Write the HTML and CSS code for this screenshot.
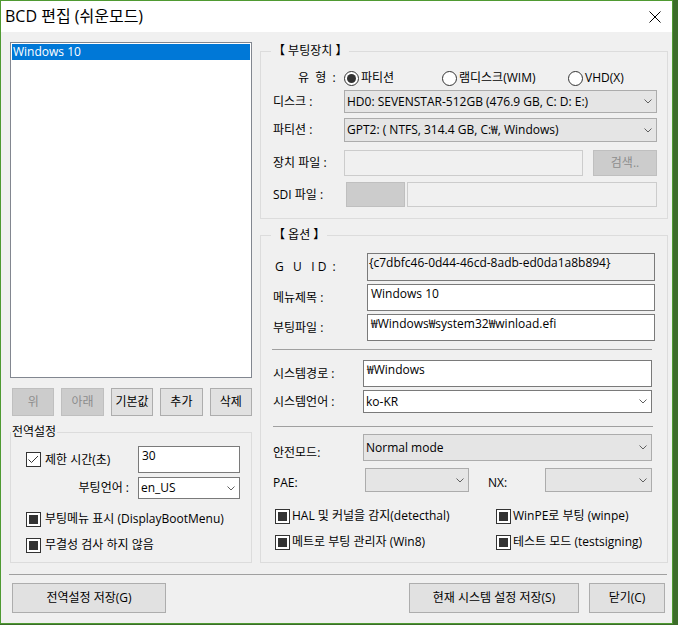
FILE: index.html
```html
<!DOCTYPE html>
<html lang="ko">
<head>
<meta charset="utf-8">
<title>BCD 편집 (쉬운모드)</title>
<link rel="stylesheet" href="styles.css">
</head>
<body>
<div class="window">
  <div class="titlebar">
    <span class="title">BCD 편집 (쉬운모드)</span>
    <span class="close"><svg width="12" height="12" viewBox="0 0 12 12"><path d="M0.5 0.5L11.5 11.5M11.5 0.5L0.5 11.5" stroke="#000" stroke-width="1" fill="none"/></svg></span>
  </div>
  <div class="client">
    <div class="main">
      <div class="left">
        <div class="listbox">
          <div class="list-item sel">Windows 10</div>
        </div>
        <div class="btnrow">
          <button class="btn dis">위</button>
          <button class="btn dis">아래</button>
          <button class="btn">기본값</button>
          <button class="btn">추가</button>
          <button class="btn">삭제</button>
        </div>
        <fieldset class="group global">
          <legend>전역설정</legend>
          <div class="global-body">
            <div class="grow r1">
              <div class="chk gchk"><span class="cb"><svg width="13" height="13" viewBox="0 0 13 13"><path d="M1.5 6.5L4.5 9.5L11 3" fill="none" stroke="#333" stroke-width="1"/></svg></span>제한 시간(초)</div>
              <div class="edit full">30</div>
            </div>
            <div class="grow r2">
              <span class="lbl-r">부팅언어 :</span>
              <div class="combo white full"><span>en_US</span><svg class="chev" width="8" height="5" viewBox="0 0 8 5"><path d="M0.5 0.5L4 4L7.5 0.5" fill="none" stroke="#606060"/></svg></div>
            </div>
            <div class="chk gchk r3"><span class="cb ind"></span>부팅메뉴 표시 (DisplayBootMenu)</div>
            <div class="chk gchk r4"><span class="cb ind"></span>무결성 검사 하지 않음</div>
          </div>
        </fieldset>
      </div>
      <div class="right">
        <fieldset class="group boot">
          <legend>【 부팅장치 】</legend>
          <div class="boot-body">
            <div class="frow type-row">
              <span class="type-lbl">유&nbsp;&nbsp;형&nbsp;&nbsp;:</span>
              <div class="radios">
                <div class="ropt"><span class="radio on"></span>파티션</div>
                <div class="ropt"><span class="radio"></span>램디스크(WIM)</div>
                <div class="ropt"><span class="radio"></span>VHD(X)</div>
              </div>
            </div>
            <div class="frow disk-row">
              <span>디스크 :</span>
              <div class="combo full"><span>HD0: SEVENSTAR-512GB (476.9 GB, C: D: E:)</span><svg class="chev" width="8" height="5" viewBox="0 0 8 5"><path d="M0.5 0.5L4 4L7.5 0.5" fill="none" stroke="#606060"/></svg></div>
            </div>
            <div class="frow part-row">
              <span>파티션 :</span>
              <div class="combo full"><span>GPT2: ( NTFS, 314.4 GB, C:₩, Windows)</span><svg class="chev" width="8" height="5" viewBox="0 0 8 5"><path d="M0.5 0.5L4 4L7.5 0.5" fill="none" stroke="#606060"/></svg></div>
            </div>
            <div class="frow dev-row">
              <span>장치 파일 :</span>
              <div class="dev-ctrl">
                <div class="edit dis-edit"></div>
                <button class="btn dis search">검색..</button>
              </div>
            </div>
            <div class="frow sdi-row">
              <span>SDI 파일 :</span>
              <div class="sdi-ctrl">
                <div class="sdi-box"></div>
                <div class="edit dis-edit"></div>
              </div>
            </div>
          </div>
        </fieldset>
        <fieldset class="group opts">
          <legend>【 옵션 】</legend>
          <div class="opts-body">
            <div class="arow guid-row">
              <span class="guid-lbl">G&nbsp;&nbsp;&nbsp;U&nbsp;&nbsp;&nbsp;I&nbsp;D&nbsp;&nbsp;:</span>
              <div class="edit ro guid">{c7dbfc46-0d44-46cd-8adb-ed0da1a8b894}</div>
            </div>
            <div class="arow menu-row">
              <span>메뉴제목 :</span>
              <div class="edit">Windows 10</div>
            </div>
            <div class="arow file-row">
              <span>부팅파일 :</span>
              <div class="edit">₩Windows₩system32₩winload.efi</div>
            </div>
            <div class="hline hline1"></div>
            <div class="brow path-row">
              <span>시스템경로 :</span>
              <div class="edit">₩Windows</div>
            </div>
            <div class="brow lang-row">
              <span>시스템언어 :</span>
              <div class="combo white full"><span>ko-KR</span><svg class="chev" width="8" height="5" viewBox="0 0 8 5"><path d="M0.5 0.5L4 4L7.5 0.5" fill="none" stroke="#606060"/></svg></div>
            </div>
            <div class="hline hline2"></div>
            <div class="brow safe-row">
              <span class="safe-lbl">안전모드:</span>
              <div class="combo full"><span>Normal mode</span><svg class="chev" width="8" height="5" viewBox="0 0 8 5"><path d="M0.5 0.5L4 4L7.5 0.5" fill="none" stroke="#606060"/></svg></div>
            </div>
            <div class="pae-row">
              <span class="pae-lbl">PAE:</span>
              <div class="combo full"><span></span><svg class="chev" width="8" height="5" viewBox="0 0 8 5"><path d="M0.5 0.5L4 4L7.5 0.5" fill="none" stroke="#606060"/></svg></div>
              <span class="pae-lbl nx-lbl">NX:</span>
              <div class="combo full"><span></span><svg class="chev" width="8" height="5" viewBox="0 0 8 5"><path d="M0.5 0.5L4 4L7.5 0.5" fill="none" stroke="#606060"/></svg></div>
            </div>
            <div class="chk-grid">
              <div class="chk ochk"><span class="cb ind"></span>HAL 및 커널을 감지(detecthal)</div>
              <div class="chk ochk"><span class="cb ind"></span>WinPE로 부팅 (winpe)</div>
              <div class="chk ochk"><span class="cb ind"></span>메트로 부팅 관리자 (Win8)</div>
              <div class="chk ochk"><span class="cb ind"></span>테스트 모드 (testsigning)</div>
            </div>
          </div>
        </fieldset>
      </div>
    </div>
    <div class="hsep"></div>
    <div class="footer">
      <button class="btn fbtn f1">전역설정 저장(G)</button>
      <button class="btn fbtn f2">현재 시스템 설정 저장(S)</button>
      <button class="btn fbtn f3">닫기(C)</button>
    </div>
  </div>
</div>
</body>
</html>
```

FILE: styles.css
```css
* { box-sizing: border-box; }
html, body { margin: 0; padding: 0; }
body {
  width: 678px;
  height: 625px;
  overflow: hidden;
  background: #3c6d2a;
  font-family: "Open Sans", "Noto Sans CJK KR", sans-serif;
  font-size: 12px;
  line-height: 16px;
  color: #000;
}
.window {
  width: 673px;
  height: 624px;
  border: 1px solid #4f9a32;
  background: #f0f0f0;
  display: flex;
  flex-direction: column;
}
.titlebar {
  flex: none;
  height: 31px;
  background: #fff;
  display: flex;
  align-items: center;
  padding-left: 4px;
}
.title {
  flex: 1;
  font-size: 16px;
  line-height: 31px;
  white-space: nowrap;
}
.close {
  width: 34px;
  height: 31px;
  display: flex;
  align-items: center;
  justify-content: center;
}
.client {
  flex: 1;
  padding: 10px 4px 0 9px;
  display: flex;
  flex-direction: column;
}
.main {
  display: grid;
  grid-template-columns: 242px 408px;
  column-gap: 8px;
  align-items: start;
}

/* controls */
.btn {
  margin: 0;
  padding: 0;
  font: inherit;
  color: #000;
  background: #e1e1e1;
  border: 1px solid #adadad;
  display: flex;
  align-items: center;
  justify-content: center;
  white-space: nowrap;
}
.btn.dis {
  background: #cccccc;
  border-color: #bfbfbf;
  color: #8d8d8d;
}
.edit {
  background: #fff;
  border: 1px solid #7a7a7a;
  padding: 1px 3px;
  white-space: nowrap;
  overflow: hidden;
  height: 100%;
}
.edit.ro { background: #f0f0f0; }
.edit.guid { padding-left: 1px; }
.edit.dis-edit {
  background: #f0f0f0;
  border-color: #cccccc;
}
.combo {
  display: flex;
  align-items: center;
  justify-content: space-between;
  border: 1px solid #acacac;
  background: #e5e5e5;
  padding: 0 4px 0 2px;
  white-space: nowrap;
  overflow: hidden;
}
.combo.white {
  background: #fff;
  border-color: #7a7a7a;
}
.full { height: 100%; }
.chev { flex: none; }

.chk {
  display: flex;
  align-items: center;
  height: 16px;
  white-space: nowrap;
}
.gchk { gap: 4px; }
.ochk { gap: 2px; }
.cb {
  flex: none;
  width: 15px;
  height: 15px;
  border: 1px solid #333;
  background: #fff;
  display: flex;
  align-items: center;
  justify-content: center;
}
.cb.ind::after {
  content: "";
  width: 9px;
  height: 9px;
  background: #333;
}
.radio {
  flex: none;
  width: 15px;
  height: 15px;
  border: 1px solid #333;
  border-radius: 50%;
  background: #fff;
  display: flex;
  align-items: center;
  justify-content: center;
}
.radio.on::after {
  content: "";
  width: 9px;
  height: 9px;
  border-radius: 50%;
  background: #333;
}

/* left column */
.left { display: flex; flex-direction: column; }
.listbox {
  height: 336px;
  border: 1px solid #828790;
  background: #fff;
  padding: 1px;
}
.list-item {
  height: 16px;
  line-height: 16px;
  padding-left: 1px;
}
.list-item.sel { background: #0078d7; color: #fff; }
.btnrow {
  margin-top: 10px;
  padding-left: 2px;
  display: grid;
  grid-template-columns: repeat(5, 1fr);
  column-gap: 7px;
}
.btnrow .btn { height: 28px; }

.group {
  margin: 0;
  padding: 0;
  min-width: 0;
  border: 1px solid #dcdcdc;
}
.group > legend {
  padding: 0 1px;
  line-height: 16px;
}
.global { margin-top: 8px; }
.global-body {
  padding: 6px 0 9px 15px;
  display: flex;
  flex-direction: column;
}
.grow {
  display: grid;
  grid-template-columns: 112px 102px;
  align-items: center;
}
.grow.r1 { height: 27px; }
.grow.r2 { height: 22px; margin-top: 4px; }
.lbl-r { text-align: right; padding-right: 9px; }
.r3 { margin-top: 12px; }
.r4 { margin-top: 10px; }

/* right column */
.right { display: flex; flex-direction: column; }
.right .group > legend { margin-left: 10px; padding: 0 2px; }
.boot { margin-top: 1px; }
.boot-body {
  padding: 11px 10px 11px 12px;
  display: flex;
  flex-direction: column;
}
.frow {
  display: grid;
  grid-template-columns: 71px 1fr;
  align-items: center;
}
.type-row { height: 16px; }
.type-lbl { padding-left: 25px; white-space: nowrap; }
.radios {
  display: grid;
  grid-template-columns: 98px 126px 1fr;
}
.ropt {
  display: flex;
  align-items: center;
  gap: 2px;
  white-space: nowrap;
}
.disk-row { height: 23px; margin-top: 4px; }
.part-row { height: 24px; margin-top: 5px; }
.dev-row { height: 26px; margin-top: 8px; }
.sdi-row { height: 25px; margin-top: 6px; }
.dev-ctrl {
  height: 100%;
  display: flex;
  gap: 10px;
}
.dev-ctrl .edit { flex: 1; }
.search { width: 64px; height: 100%; }
.sdi-ctrl {
  height: 100%;
  display: flex;
  gap: 2px;
  padding-left: 2px;
}
.sdi-box {
  width: 59px;
  background: #cccccc;
  border: 1px solid #bfbfbf;
}
.sdi-ctrl .edit { flex: 1; }

.opts { margin-top: 8px; }
.opts-body {
  padding: 10px 12px 12px 12px;
  display: flex;
  flex-direction: column;
}
.arow {
  display: grid;
  grid-template-columns: 94px 1fr;
  align-items: center;
}
.guid-row { height: 28px; }
.menu-row { height: 27px; margin-top: 3px; }
.file-row { height: 27px; margin-top: 3px; }
.guid-lbl { padding-left: 2px; white-space: nowrap; }
.hline { height: 1px; background: #a0a0a0; }
.hline1 { margin: 8px 3px 0 -1px; }
.hline2 { margin: 13px 2px 0 0; }
.brow {
  display: grid;
  grid-template-columns: 90px 1fr;
  align-items: center;
  margin-right: 3px;
}
.path-row { height: 27px; margin-top: 10px; }
.lang-row { height: 23px; margin-top: 3px; }
.safe-row { height: 23px; margin-top: 7px; }
.safe-lbl { align-self: start; margin-top: 11px; }
.pae-row {
  display: grid;
  grid-template-columns: 92px 104px 76px 107px;
  height: 24px;
  margin-top: 11px;
}
.pae-lbl { margin-top: 7px; }
.nx-lbl { padding-left: 19px; }
.chk-grid {
  display: grid;
  grid-template-columns: 221px 1fr;
  row-gap: 10px;
  margin-top: 16px;
  padding-left: 2px;
}

/* footer */
.hsep {
  height: 1px;
  background: #a0a0a0;
  margin: 11px 1px 0 -1px;
}
.footer {
  margin-top: 8px;
  display: flex;
  padding: 0 3px 0 2px;
}
.fbtn { height: 30px; }
.f1 { width: 154px; }
.f2 { width: 170px; margin-left: auto; }
.f3 { width: 76px; margin-left: 10px; }
```
